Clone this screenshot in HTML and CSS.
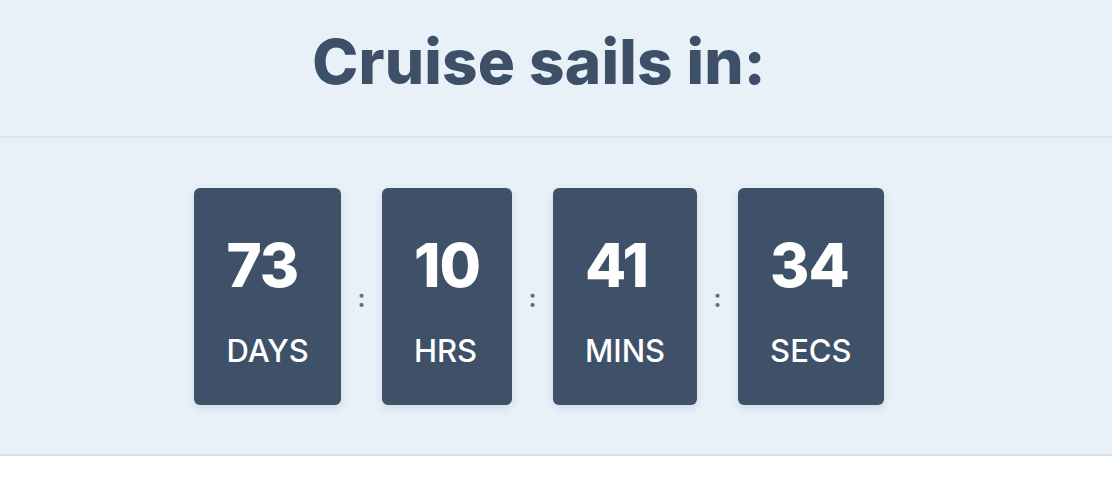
FILE: index.html
```html
<!DOCTYPE html>
<html lang="en">
<head>
<meta charset="UTF-8">
<meta name="viewport" content="width=device-width, initial-scale=1.0">
<title>Cruise Countdown</title>
<link rel="stylesheet" href="styles.css">
</head>
<body>
    <div class="page">
        <div class="header">
            <h1 class="title">Cruise sails in:</h1>
        </div>
        <div class="countdown">
            <div class="unit">
                <span class="num">73</span>
                <span class="label">DAYS</span>
            </div>
            <span class="colon">:</span>
            <div class="unit">
                <span class="num">10</span>
                <span class="label">HRS</span>
            </div>
            <span class="colon">:</span>
            <div class="unit">
                <span class="num">41</span>
                <span class="label">MINS</span>
            </div>
            <span class="colon">:</span>
            <div class="unit">
                <span class="num">34</span>
                <span class="label">SECS</span>
            </div>
        </div>
    </div>
</body>
</html>
```

FILE: styles.css
```css
html, body{
margin: 0;
padding: 0;
background: #ffffff;
font-family: Inter, "Noto Sans", sans-serif;
}

.page{
background: #e8f0f8;
border-bottom: 2px solid #dae2ea;
box-shadow: 0px 5px 12px rgba(0, 0, 0, 0.07);
}

.header{
height: 138px;
box-sizing: border-box;
padding-top: 31px;
padding-right: 34px;
border-bottom: 2px solid #dbe3eb;
}

.title{
margin: 0;
text-align: center;
font-size: 62px;
line-height: 62px;
font-weight: 800;
letter-spacing: 0.2px;
color: #3d5068;
}

.countdown{
height: 316px;
display: flex;
justify-content: center;
align-items: flex-start;
padding-top: 50px;
padding-right: 34px;
box-sizing: border-box;
}

.unit{
display: flex;
flex-direction: column;
align-items: flex-start;
padding: 47px 32px 39px 32px;
background-color: #3f5169;
border-radius: 6px;
box-shadow: 0px 3px 8px rgba(40, 60, 90, 0.12);
color: #ffffff;
}

.num{
font-size: 60px;
line-height: 60px;
font-weight: 800;
letter-spacing: -1px;
}

.label{
margin-top: 40px;
font-size: 31px;
line-height: 31px;
font-weight: 500;
}

.colon{
width: 41px;
text-align: center;
margin-top: 98px;
font-size: 25px;
line-height: 24px;
font-weight: 600;
color: #5b6f8c;
}
```
